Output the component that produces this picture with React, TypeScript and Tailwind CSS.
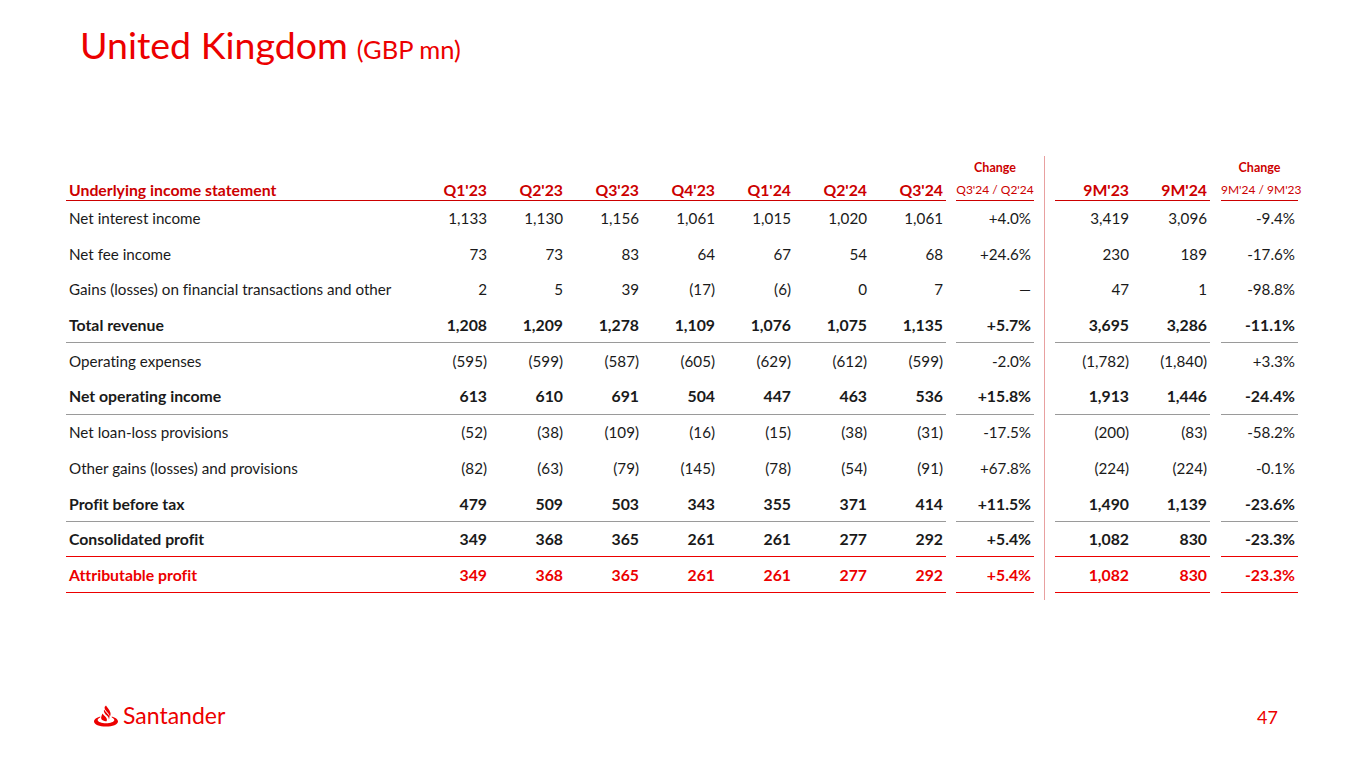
import React from "react";

type Row = {
  label: string;
  q: string[];
  chg: string;
  ytd: string[];
  ychg: string;
  bold?: boolean;
  red?: boolean;
  line?: "gray" | "red";
};

const rows: Row[] = [
  { label: "Net interest income", q: ["1,133", "1,130", "1,156", "1,061", "1,015", "1,020", "1,061"], chg: "+4.0%", ytd: ["3,419", "3,096"], ychg: "-9.4%" },
  { label: "Net fee income", q: ["73", "73", "83", "64", "67", "54", "68"], chg: "+24.6%", ytd: ["230", "189"], ychg: "-17.6%" },
  { label: "Gains (losses) on financial transactions and other", q: ["2", "5", "39", "(17)", "(6)", "0", "7"], chg: "—", ytd: ["47", "1"], ychg: "-98.8%" },
  { label: "Total revenue", q: ["1,208", "1,209", "1,278", "1,109", "1,076", "1,075", "1,135"], chg: "+5.7%", ytd: ["3,695", "3,286"], ychg: "-11.1%", bold: true, line: "gray" },
  { label: "Operating expenses", q: ["(595)", "(599)", "(587)", "(605)", "(629)", "(612)", "(599)"], chg: "-2.0%", ytd: ["(1,782)", "(1,840)"], ychg: "+3.3%" },
  { label: "Net operating income", q: ["613", "610", "691", "504", "447", "463", "536"], chg: "+15.8%", ytd: ["1,913", "1,446"], ychg: "-24.4%", bold: true, line: "gray" },
  { label: "Net loan-loss provisions", q: ["(52)", "(38)", "(109)", "(16)", "(15)", "(38)", "(31)"], chg: "-17.5%", ytd: ["(200)", "(83)"], ychg: "-58.2%" },
  { label: "Other gains (losses) and provisions", q: ["(82)", "(63)", "(79)", "(145)", "(78)", "(54)", "(91)"], chg: "+67.8%", ytd: ["(224)", "(224)"], ychg: "-0.1%" },
  { label: "Profit before tax", q: ["479", "509", "503", "343", "355", "371", "414"], chg: "+11.5%", ytd: ["1,490", "1,139"], ychg: "-23.6%", bold: true, line: "gray" },
  { label: "Consolidated profit", q: ["349", "368", "365", "261", "261", "277", "292"], chg: "+5.4%", ytd: ["1,082", "830"], ychg: "-23.3%", bold: true, line: "red" },
  { label: "Attributable profit", q: ["349", "368", "365", "261", "261", "277", "292"], chg: "+5.4%", ytd: ["1,082", "830"], ychg: "-23.3%", bold: true, red: true, line: "red" },
];

const quarters = ["Q1'23", "Q2'23", "Q3'23", "Q4'23", "Q1'24", "Q2'24", "Q3'24"];

function rowClass(r: Row) {
  const line =
    r.line === "gray"
      ? "border-b border-[#9a9a9a]"
      : r.line === "red"
      ? "border-b-[1.5px] border-[#ec0000]"
      : "";
  const color = r.red ? "text-[#ec0000]" : "text-[#1a1a1a]";
  const weight = r.bold ? "font-bold text-[15.8px]" : "font-normal text-[15.2px]";
  return `flex h-[35.7px] items-center ${line} ${color} ${weight}`;
}

function Section({
  top,
  head,
  cells,
  widths,
  small,
}: {
  top?: string;
  head: string[];
  cells: (r: Row) => string[];
  widths: string[];
  small?: boolean;
}) {
  return (
    <div className="flex flex-col">
      <div className="flex h-[24px] items-center justify-center pt-[2px] text-[12.5px] font-bold text-[#cc0000]">
        {top}
      </div>
      <div className="flex h-[21px] items-center border-b-[1.5px] border-[#cc0000] font-bold text-[#cc0000]">
        {head.map((h, i) => (
          <div
            key={i}
            className={`${widths[i]} ${
              small
                ? "text-center text-[12px] font-normal whitespace-nowrap"
                : i === 0 && widths.length > 3
                ? "pl-[3px] text-left text-[15.8px]"
                : "pr-[3px] text-right text-[15.8px]"
            }`}
          >
            {h}
          </div>
        ))}
      </div>
      {rows.map((r, ri) => (
        <div key={ri} className={rowClass(r)}>
          {cells(r).map((c, i) => (
            <div
              key={i}
              className={`${widths[i]} ${
                i === 0 && widths.length > 3 ? "pl-[3px] text-left" : "pr-[3px] text-right"
              } whitespace-nowrap`}
            >
              {c}
            </div>
          ))}
        </div>
      ))}
    </div>
  );
}

function Logo() {
  return (
    <div className="flex items-center gap-[4px]">
      <svg width="26" height="22" viewBox="0 0 26 22">
        <path
          d="M13 0.5c1.6 2.6 4.6 5.2 4.6 8.6 0 1.2-.4 2.1-.9 2.9.2-1.6-.9-3.2-2.7-5.1-1.4-1.5-2.6-3-2.4-5 .4-.5.9-.9 1.4-1.4z M11.2 4.4c.8 1.9 3.1 3.6 4.4 5.6.9 1.4 1.1 2.8.4 4.2l-.2.4c.3-1.3-.5-2.6-2-4.1-1.6-1.6-3.3-3.2-2.9-5.6.1-.2.2-.4.3-.5z M9.6 8.6c.9 1.6 2.8 2.9 3.8 4.5.6 1 .7 2 .2 3.1-1.3-.1-3.1-.5-4.4-1.3-.9-.7-1.2-1.6-1-2.7.2-1.4.8-2.5 1.4-3.6z M7.3 11.4c-3.7 1-6.3 2.9-6.3 5.1 0 3 5.4 5 12 5s12-2 12-5c0-2.2-2.6-4.1-6.3-5.1.1.4.1.8.1 1.2 1.6.7 2.5 1.5 2.5 2.5 0 2-4 3.2-8.3 3.2S4.7 17.1 4.7 15.1c0-1 .9-1.8 2.5-2.5 0-.4 0-.8.1-1.2z"
          fill="#ec0000"
        />
      </svg>
      <span className="text-[23px] font-normal leading-none text-[#ec0000]">Santander</span>
    </div>
  );
}

export default function App() {
  const mainW = ["w-[348px]", ...quarters.map(() => "w-[76px]")];
  return (
    <div
      className="relative h-[768px] w-[1365px] overflow-hidden bg-white [font-variant-ligatures:none]"
      style={{ fontFamily: "Lato, 'Open Sans', sans-serif" }}
    >
      <div className="flex items-baseline gap-[9px] pl-[80px] pt-[26px] leading-none text-[#ec0000]">
        <span className="text-[37.5px]">United Kingdom</span>
        <span className="text-[25.5px]">(GBP mn)</span>
      </div>

      <div className="mt-[92px] flex pl-[66px]">
        <Section
          head={["Underlying income statement", ...quarters]}
          cells={(r) => [r.label, ...r.q]}
          widths={mainW}
        />
        <div className="ml-[10px]">
          <Section
            top="Change"
            head={["Q3'24 / Q2'24"]}
            cells={(r) => [r.chg]}
            widths={["w-[78px]"]}
            small
          />
        </div>
        <div className="-mb-[7px] flex w-[21px] justify-center">
          <div className="w-[1.5px] bg-[#e8a0a0]" />
        </div>
        <Section
          head={["9M'23", "9M'24"]}
          cells={(r) => r.ytd}
          widths={["w-[77px]", "w-[78px]"]}
        />
        <div className="ml-[11px]">
          <Section
            top="Change"
            head={["9M'24 / 9M'23"]}
            cells={(r) => [r.ychg]}
            widths={["w-[77px]"]}
            small
          />
        </div>
      </div>

      <div className="absolute bottom-[41px] left-[93px]">
        <Logo />
      </div>
      <div className="absolute bottom-[42px] right-[87px] text-[18px] leading-none text-[#ec0000]">47</div>
    </div>
  );
}
